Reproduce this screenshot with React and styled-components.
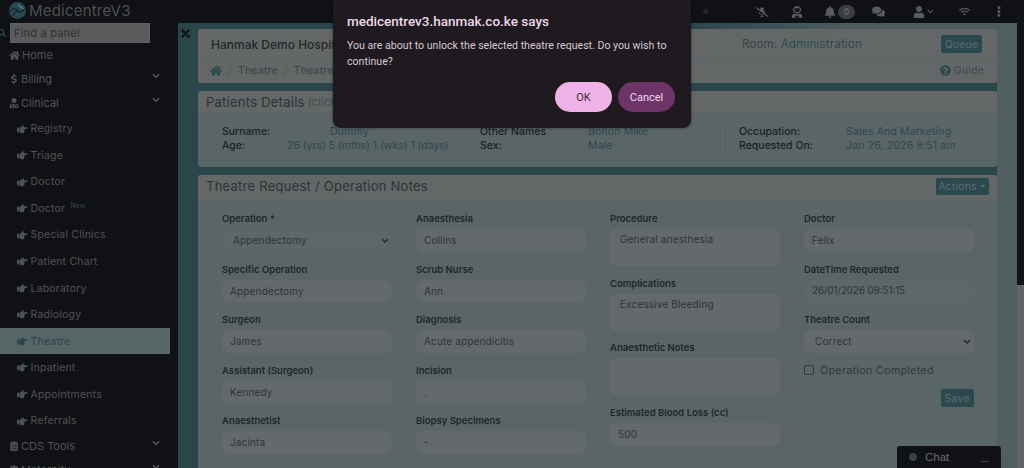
import React from "react";
import styled, { createGlobalStyle } from "styled-components";
import {
  FaHome, FaDollarSign, FaUserMd, FaHandPointRight, FaClipboardList, FaChevronDown, FaTimes,
  FaQuestionCircle, FaMicrophoneSlash, FaUserAstronaut, FaBell, FaComments, FaUser, FaWifi, FaEllipsisV, FaSearch, FaCaretDown,
} from "react-icons/fa";

const Global = createGlobalStyle`
  html, body { margin: 0; padding: 0; height: 468px; overflow: hidden; background: #101114; }
  * { box-sizing: border-box; }
  #root { height: 468px; }
`;

const Page = styled.div`
  position: relative; width: 1024px; height: 468px; display: flex; overflow: hidden;
  font-family: Inter, "Open Sans", "Liberation Sans", sans-serif; color: #3a4345;
`;
const Shell = styled.div`flex: 1; min-width: 0; display: flex; flex-direction: column;`;
const Track = styled.div`width: 7px; background: #636464; flex: none;`;
const Thumb = styled.div`height: 285px; background: #121315;`;

const Topbar = styled.header`height: 23px; flex: none; background: #101114; display: flex; align-items: center; position: relative; padding-left: 9px;`;
const Brand = styled.div`display: flex; align-items: center; gap: 3px; font-size: 15px; color: #4c5052; letter-spacing: .2px; transform: translateY(-1px);`;
const Tools = styled.div`margin-left: auto; display: flex; align-items: center; color: #595c5e; height: 23px; padding-right: 15px; gap: 0;`;
const FaintDot = styled.span`width: 5px; height: 5px; border-radius: 50%; background: #232426; margin-right: 48px;`;
const Tool = styled.span`display: inline-flex; align-items: center; justify-content: center; width: ${p => p.$w}px; margin-left: ${p => p.$gap}px; font-size: ${p => p.$size || 12}px;`;
const Badge = styled.span`width: 17px; height: 14px; margin-left: 2px; border-radius: 8px; background: #3a3d3f; color: #65696b; font-size: 8.5px; font-weight: 600; display: inline-flex; align-items: center; justify-content: center;`;

const Body = styled.div`flex: 1; min-height: 0; display: flex;`;
const Sidebar = styled.nav`width: 178px; flex: none; background: #101114; color: #505355; font-size: 11px; overflow: hidden;`;
const SearchRow = styled.div`display: flex; align-items: center; height: 20px; gap: 4px; margin-left: -2px; color: #2a484e; font-size: 8px;`;
const SearchInput = styled.input`
  width: 140px; height: 20px; border: 1px solid #5f6060; background: #5a5b5c; padding: 0 3px; margin: 0;
  font: 11px Inter, sans-serif; color: #2c2e30; letter-spacing: .2px;
  &::placeholder { color: #303234; opacity: 1; }
`;
const TopItem = styled.div`display: flex; align-items: center; height: 24px; width: 170px; padding: 0 6px 0 ${p => p.$pad || 9}px; gap: 2px; position: relative; svg { flex: none; }`;
const ItemChevron = styled.span`margin-left: auto; margin-right: 4px; color: #5e6164; font-size: 8px; display: inline-flex; transform: translateY(-3px);`;
const SubList = styled.div`display: flex; flex-direction: column; padding-top: .5px;`;
const SubItem = styled.div`
  height: 26.55px; width: 170px; display: flex; align-items: center; gap: 3px; padding-left: 17px;
  background: ${p => p.$active ? "#586566" : "transparent"}; color: ${p => p.$active ? "#2a464c" : "#505355"};
  font-size: 10.5px; letter-spacing: .2px; svg { font-size: 10.5px; }
`;
const Sup = styled.sup`font-size: 7px; color: #2a484e; margin-left: 2px; position: relative; top: -2px; line-height: 0;`;

const Main = styled.main`
  flex: 1; min-width: 0; display: flex; position: relative; overflow: hidden; background-color: #2a464b;
  background-image: linear-gradient(to right, #2a464b 60%, #4c5c5f 80%);
  background-size: 100% 6px; background-repeat: no-repeat;
`;
const CloseBtn = styled.span`position: absolute; left: 1px; top: 4px; color: #141719; font-size: 13px; display: inline-flex;`;
const Content = styled.div`flex: none; width: 799px; margin-left: 20px; padding-top: 6px; display: flex; flex-direction: column; gap: 8px; color: #3a4345;`;
const Gutter = styled.div`flex: 1; background: #525f61;`;
const Card = styled.section`flex: none; background: #596567; border-radius: 3px; overflow: hidden;`;
const CardHeader = styled.div`background: #636768; height: ${p => p.$h}px; display: flex; align-items: center; padding: 0 8px ${p => p.$lift || 0}px; font-size: 13px; color: #2e3436; letter-spacing: .25px; border-bottom: 1px solid #5a6263;`;
const Small = styled.span`font-size: 11px; color: #454a4c; margin-left: 3px;`;
const HospitalBar = styled.div`height: 31px; background: #636768; display: flex; align-items: center; padding: 0 15px 0 13px; border-bottom: 1px solid #5a6263;`;
const HospitalName = styled.span`width: 531px; font-size: 12px; color: #23282a; font-weight: 500; white-space: nowrap;`;
const Room = styled.div`margin-right: auto; font-size: 11.5px; letter-spacing: .2px; color: #3a4345; b { font-weight: 400; color: #2c4a50; }`;
const TealButton = styled.button`
  height: ${p => p.$h || 18}px; width: ${p => p.$w}px; border: 0; border-radius: 2px; background: #2a484e; color: #5c6c6f;
  font: 10.5px Inter, sans-serif; letter-spacing: .2px; padding: 0; display: inline-flex; align-items: center; justify-content: center; gap: 2px;
  margin-left: ${p => p.$push ? "auto" : "0"};
`;
const Crumbs = styled.div`height: 23px; background: #636768; display: flex; align-items: center; padding: 0 13px 2px 12px; font-size: 10.5px; color: #3a4244; gap: 6px; letter-spacing: .2px; white-space: nowrap;`;
const Sep = styled.span`color: #4c5355;`;
const HomeIcon = styled.span`color: #2a484e; font-size: 12px; display: inline-flex;`;
const Guide = styled.span`margin-left: auto; display: inline-flex; align-items: center; gap: 3px; color: #3c494c; svg { color: #2a484e; font-size: 11px; }`;

const InfoRow = styled.div`height: 53px; display: flex; align-items: center; padding: 0 0 3px 24px;`;
const InfoBlock = styled.div`
  width: ${p => p.$w}px; height: 29px; display: grid; grid-template-columns: ${p => p.$label}px 1fr; grid-auto-rows: 14px;
  font-size: 10.5px; align-items: center; ${p => p.$divider ? "border-right: 1px solid #4e5e61;" : ""} margin-right: ${p => p.$mr || 0}px; white-space: nowrap;
`;
const InfoLabel = styled.span`color: #1c2123; font-weight: 500;`;
const InfoValue = styled.span`color: #2e484d; padding-left: ${p => p.$indent || 0}px; letter-spacing: ${p => p.$tight ? "-.02px" : ".15px"};`;

const FormGrid = styled.div`display: grid; grid-template-columns: repeat(4, 169.5px); column-gap: 24.5px; padding: 11px 24px 0; height: 300px;`;
const Col = styled.div`display: flex; flex-direction: column;`;
const Field = styled.div`height: ${p => p.$h || 50.5}px; flex: none;`;
const Label = styled.div`font-size: 9.5px; font-weight: 600; color: #1f2527; height: 13px; line-height: 13px; margin-bottom: 4px; white-space: nowrap;`;
const fieldStyle = `
  display: block; width: 100%; margin: 0; border: 0; outline: 0; border-radius: 7px; background: #646a6b;
  font: 10px Inter, sans-serif; color: #2d3436; letter-spacing: .15px; resize: none;
`;
const Input = styled.input`${fieldStyle} height: 22.5px; padding: 0 8px;`;
const Select = styled.select`
  ${fieldStyle} height: 22.5px; padding: 0 11px; appearance: none;
  background: ${p => p.$dim ? "#5c6769" : "#646a6b"} url("data:image/svg+xml,%3Csvg xmlns='http://www.w3.org/2000/svg' width='8' height='5' viewBox='0 0 8 5'%3E%3Cpath d='M1 1l3 3 3-3' fill='none' stroke='%2320272a' stroke-width='1.3'/%3E%3C/svg%3E") no-repeat right 3px center;
`;
const DateInput = styled(Input)`background: #5c6769; padding-left: 8px; letter-spacing: 0; font-size: 9.7px;`;
const Area = styled.textarea`${fieldStyle} height: 37px; padding: 4px 10px;`;
const CheckRow = styled.label`display: flex; align-items: center; gap: 6px; font-size: 10.8px; letter-spacing: .25px; color: #30393b; height: 22px; white-space: nowrap;`;
const Box = styled.span`width: 10px; height: 10px; border: 1px solid #343a3c; border-radius: 2px; flex: none;`;
const SaveRow = styled.div`display: flex; justify-content: flex-end; margin-top: 8px;`;

const Dialog = styled.div`
  position: absolute; left: 333px; top: 0; width: 358px; height: 128px; background: #1f1a1f; border-radius: 0 0 8px 8px;
  padding: 13px 14px; font-family: Roboto, "Open Sans", sans-serif; box-shadow: 0 0 3px rgba(0,0,0,.5);
`;
const DialogTitle = styled.div`font-size: 13.5px; font-weight: 500; color: #eed8ea; line-height: 16px; margin-bottom: 9px; white-space: nowrap;`;
const DialogText = styled.div`font-size: 10.6px; color: #d8c8d5; line-height: 16px;`;
const DialogActions = styled.div`position: absolute; right: 16px; bottom: 16px; display: flex; gap: 6px;`;
const Pill = styled.button`
  width: 57px; height: 30px; border: 0; border-radius: 15px; padding: 0; font: 400 11px Roboto, sans-serif;
  background: ${p => p.$primary ? "#f0b2e6" : "#6d3468"}; color: ${p => p.$primary ? "#3c2a39" : "#f0d8ec"};
`;
const Chat = styled.div`
  position: absolute; left: 897px; top: 446px; width: 104px; height: 22px; background: #101114; border-radius: 3px 3px 0 0;
  display: flex; align-items: center; padding: 0 12px 0 12px; font: 11.5px "Liberation Sans", sans-serif; color: #6a6c6e;
`;
const ChatDot = styled.span`width: 8px; height: 8px; border-radius: 50%; background: #34454a; margin-right: 8px;`;
const ChatMin = styled.span`margin-left: auto; width: 8px; height: 1px; background: #444; transform: translateY(4px);`;

const Logo = () => (
  <svg width="17" height="17" viewBox="0 0 17 17" aria-hidden="true">
    <circle cx="8.5" cy="8.5" r="8.5" fill="#2a4850" />
    <path d="M1 9c3-3 5-3 7-1s4 3 8-1M4 14c2-5 5-6 8-3" fill="none" stroke="#15282d" strokeWidth="1.4" />
    <path d="M9 3c2 1 4 2 5 4" fill="none" stroke="#5e8792" strokeWidth="1.2" />
  </svg>
);

const Hand = () => <FaHandPointRight />;
const subs = ["Registry", "Triage", "Doctor", "Doctor", "Special Clinics", "Patient Chart", "Laboratory", "Radiology", "Theatre", "Inpatient", "Appointments", "Referrals"];

const TextField = ({ label, value }) => (
  <Field><Label>{label}</Label><Input readOnly defaultValue={value} /></Field>
);
const AreaField = ({ label, value }) => (
  <Field $h={64.7}><Label>{label}</Label><Area readOnly defaultValue={value} /></Field>
);

export default function App() {
  return (
    <Page>
      <Global />
      <Shell>
        <Topbar>
          <Brand><Logo />MedicentreV3</Brand>
          <Tools>
            <FaintDot />
            <Tool $w={12} $gap={0} $size={12}><FaMicrophoneSlash /></Tool>
            <Tool $w={12} $gap={23} $size={12}><FaUserAstronaut /></Tool>
            <Tool $w={12} $gap={21} $size={12}><FaBell /></Tool>
            <Badge>0</Badge>
            <Tool $w={14} $gap={16} $size={13}><FaComments /></Tool>
            <Tool $w={13} $gap={27} $size={12}><FaUser /></Tool>
            <Tool $w={8} $gap={1} $size={7}><FaChevronDown /></Tool>
            <Tool $w={12} $gap={24} $size={11}><FaWifi /></Tool>
            <Tool $w={6} $gap={26} $size={11}><FaEllipsisV /></Tool>
          </Tools>
        </Topbar>
        <Body>
          <Sidebar>
            <SearchRow><FaSearch /><SearchInput placeholder="Find a panel" /></SearchRow>
            <TopItem><FaHome size={11} />Home</TopItem>
            <TopItem><FaDollarSign size={10} />Billing<ItemChevron><FaChevronDown /></ItemChevron></TopItem>
            <TopItem><FaUserMd size={10} />Clinical<ItemChevron><FaChevronDown /></ItemChevron></TopItem>
            <SubList>
              {subs.map((s, i) => (
                <SubItem key={i} $active={s === "Theatre"}>
                  <Hand />{s}{i === 3 && <Sup>New</Sup>}
                </SubItem>
              ))}
            </SubList>
            <TopItem><FaClipboardList size={10} />CDS Tools<ItemChevron><FaChevronDown /></ItemChevron></TopItem>
            <TopItem><FaClipboardList size={10} />Maternity<ItemChevron><FaChevronDown /></ItemChevron></TopItem>
          </Sidebar>
          <Main>
            <CloseBtn><FaTimes /></CloseBtn>
            <Content>
              <Card>
                <HospitalBar>
                  <HospitalName>Hanmak Demo Hospital</HospitalName>
                  <Room>Room: <b>Administration</b></Room>
                  <TealButton $w={41}>Queue</TealButton>
                </HospitalBar>
                <Crumbs>
                  <HomeIcon><FaHome /></HomeIcon><Sep>/</Sep>Theatre<Sep>/</Sep>Theatre Request
                  <Guide><FaQuestionCircle />Guide</Guide>
                </Crumbs>
              </Card>
              <Card>
                <CardHeader $h={23}>Patients Details<Small>(click to view more)</Small></CardHeader>
                <InfoRow>
                  <InfoBlock $w={258} $label={65}>
                    <InfoLabel>Surname:</InfoLabel><InfoValue $indent={43}>Dummy</InfoValue>
                    <InfoLabel>Age:</InfoLabel><InfoValue $tight>26 (yrs) 5 (mths) 1 (wks) 1 (days)</InfoValue>
                  </InfoBlock>
                  <InfoBlock $w={246} $label={108} $divider $mr={13}>
                    <InfoLabel>Other Names</InfoLabel><InfoValue>Bolton Mike</InfoValue>
                    <InfoLabel>Sex:</InfoLabel><InfoValue>Male</InfoValue>
                  </InfoBlock>
                  <InfoBlock $w={240} $label={107}>
                    <InfoLabel>Occupation:</InfoLabel><InfoValue>Sales And Marketing</InfoValue>
                    <InfoLabel>Requested On:</InfoLabel><InfoValue>Jan 26, 2026 9:51 am</InfoValue>
                  </InfoBlock>
                </InfoRow>
              </Card>
              <Card>
                <CardHeader $h={26} $lift={3}>
                  Theatre Request / Operation Notes
                  <TealButton $w={53} $h={17} $push>Actions <FaCaretDown size={8} /></TealButton>
                </CardHeader>
                <FormGrid>
                  <Col>
                    <Field>
                      <Label>Operation *</Label>
                      <Select $dim defaultValue="Appendectomy"><option>Appendectomy</option></Select>
                    </Field>
                    <TextField label="Specific Operation" value="Appendectomy" />
                    <TextField label="Surgeon" value="James" />
                    <TextField label="Assistant (Surgeon)" value="Kennedy" />
                    <TextField label="Anaesthetist" value="Jacinta" />
                  </Col>
                  <Col>
                    <TextField label="Anaesthesia" value="Collins" />
                    <TextField label="Scrub Nurse" value="Ann" />
                    <TextField label="Diagnosis" value="Acute appendicitis" />
                    <TextField label="Incision" value="." />
                    <TextField label="Biopsy Specimens" value="-" />
                  </Col>
                  <Col>
                    <AreaField label="Procedure" value="General anesthesia" />
                    <AreaField label="Complications" value="Excessive Bleeding" />
                    <AreaField label="Anaesthetic Notes" value="" />
                    <TextField label="Estimated Blood Loss (cc)" value="500" />
                  </Col>
                  <Col>
                    <TextField label="Doctor" value="Felix" />
                    <Field><Label>DateTime Requested</Label><DateInput readOnly defaultValue="26/01/2026 09:51:15" /></Field>
                    <Field $h={46}>
                      <Label>Theatre Count</Label>
                      <Select defaultValue="Correct"><option>Correct</option></Select>
                    </Field>
                    <CheckRow><Box />Operation Completed</CheckRow>
                    <SaveRow><TealButton $w={33}>Save</TealButton></SaveRow>
                  </Col>
                </FormGrid>
              </Card>
            </Content>
            <Gutter />
          </Main>
        </Body>
      </Shell>
      <Track><Thumb /></Track>
      <Dialog>
        <DialogTitle>medicentrev3.hanmak.co.ke says</DialogTitle>
        <DialogText>You are about to unlock the selected theatre request. Do you wish to continue?</DialogText>
        <DialogActions>
          <Pill $primary>OK</Pill>
          <Pill>Cancel</Pill>
        </DialogActions>
      </Dialog>
      <Chat><ChatDot />Chat<ChatMin /></Chat>
    </Page>
  );
}
